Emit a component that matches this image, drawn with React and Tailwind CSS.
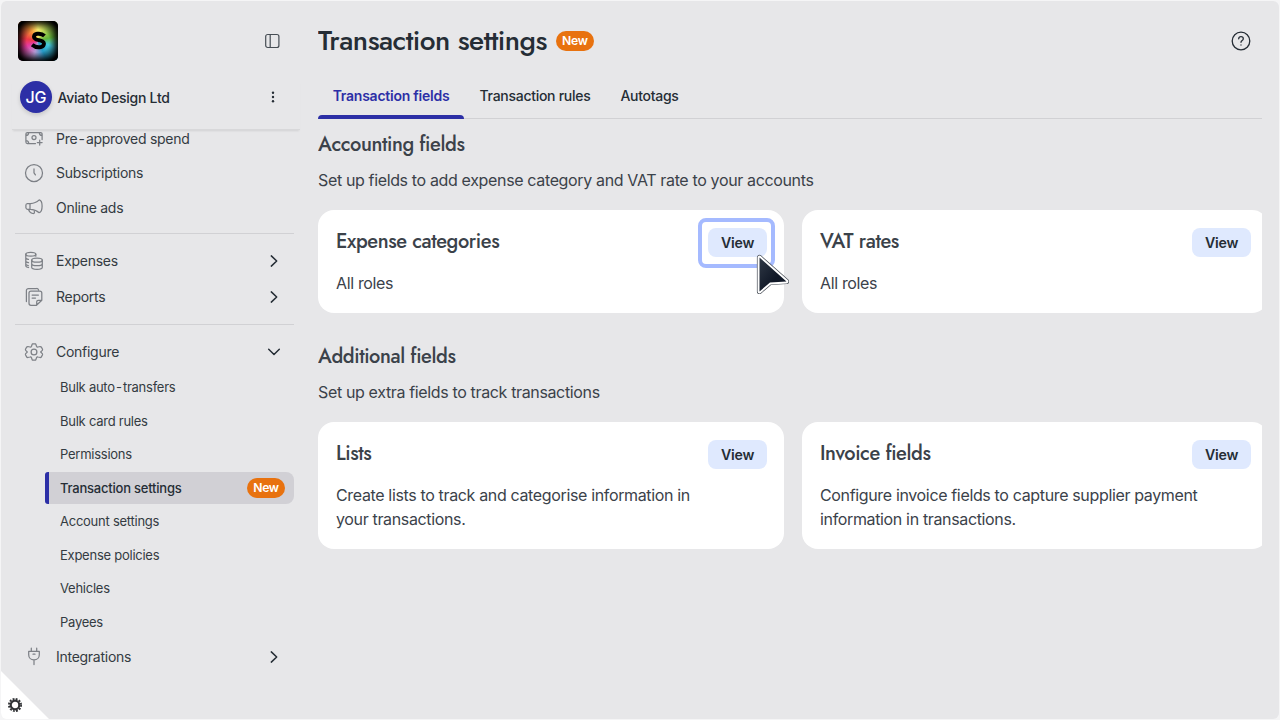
const subItems = [
  'Bulk auto-transfers',
  'Bulk card rules',
  'Permissions',
  'Transaction settings',
  'Account settings',
  'Expense policies',
  'Vehicles',
  'Payees',
]

function Icon({ children, className = 'size-5' }) {
  return (
    <svg
      viewBox="0 0 20 20"
      fill="none"
      stroke="currentColor"
      strokeWidth="1.25"
      strokeLinecap="round"
      strokeLinejoin="round"
      className={`shrink-0 ${className}`}
    >
      {children}
    </svg>
  )
}

const icons = {
  money: (
    <Icon>
      <path d="M11.500 14.500H3.400a1.500 1.500 0 0 1-1.500-1.500V5a1.500 1.500 0 0 1 1.500-1.500h13.200A1.500 1.500 0 0 1 18.100 5v5.500M1.900 6.500c1.800 0 2.800-1.100 2.800-3M18.100 6.500c-1.800 0-2.800-1.100-2.800-3M1.900 11.600c1.800 0 2.800 1.100 2.800 2.900M15.700 11.200v4.800M13.300 13.600h4.800" />
      <circle cx="10" cy="8.600" r="2" />
    </Icon>
  ),
  clock: (
    <Icon>
      <circle cx="10" cy="10" r="8.500" />
      <path d="M10 5.900v4l1.400 2" />
    </Icon>
  ),
  megaphone: (
    <Icon>
      <path d="M6.500 5.500H3.400A1.700 1.700 0 0 0 1.900 7.200v2.600a1.700 1.700 0 0 0 1.700 1.500h2.900c3.200 0 6.200 1.200 8.700 3.400 2-.4 2.900-3.300 2.900-6.600s-.9-5.800-2.900-6.200C12.700 4.300 9.700 5.500 6.500 5.500ZM6 5.600v5.600M4.600 11.600c.5 2 1.800 3.200 4.200 3.900 1.100.2 1.800-.4 1.600-1.500l-.3-2" />
    </Icon>
  ),
  coins: (
    <Icon>
      <ellipse cx="6.800" cy="3.200" rx="5" ry="1.900" />
      <path d="M1.800 3.200v11.500c0 .8 1.100 1.500 2.800 1.800M11.800 3.200v2M1.800 6.800c0 .8 1.100 1.400 2.600 1.600M1.800 10c0 .8 1.100 1.400 2.700 1.600M1.800 13c0 .7 1 1.300 2.500 1.600" />
      <ellipse cx="13" cy="9.200" rx="5.300" ry="2" />
      <path d="M7.700 9.200v7c0 1.200 2.300 2.100 5.300 2.100s5.300-.9 5.300-2.100v-7M7.700 12.700c0 1.200 2.300 2 5.300 2s5.300-.8 5.300-2" />
    </Icon>
  ),
  notes: (
    <Icon>
      <path d="M12.500 18.300H7a2 2 0 0 1-2-2V6a2 2 0 0 1 2-2h8.800a2 2 0 0 1 2 2v7.200l-5.300 5.100ZM12.700 18v-3.200a1.500 1.500 0 0 1 1.500-1.500h3.400M2.400 14.500V3.500a2 2 0 0 1 2-2h8.200a2 2 0 0 1 1.900 1.300M8.100 8.100h6.300M8.100 11h3.400" />
    </Icon>
  ),
  gear: (
    <Icon>
      <path d="M8.300 1.900h3.400l.8 2.300c.3.700.8 1 1.500.8l2.200-.5c.7 0 1 .3 1.300.9l.9 1.600c.3.600.3.900-.1 1.400L16.900 9.700c-.2.200-.2.400 0 .6l1.400 1.300c.4.500.4.800.1 1.400l-.9 1.600c-.3.600-.6.900-1.300.9l-2.200-.5c-.7-.2-1.200.1-1.500.8l-.8 2.300H8.300l-.8-2.300c-.3-.7-.8-1-1.500-.8l-2.200.5c-.7 0-1-.3-1.300-.9L1.600 13c-.3-.6-.3-.9.100-1.400l1.400-1.300c.2-.2.2-.4 0-.6L1.700 8.400c-.4-.5-.4-.8-.1-1.400l.9-1.600c.3-.6.6-.9 1.300-.9L6 5c.7.2 1.200-.1 1.500-.8z" />
      <circle cx="10" cy="10" r="2.900" />
    </Icon>
  ),
  plug: (
    <Icon>
      <path d="M7.300 1.200v3M12.700 1.200v3M4.700 4.300h10.600v3.400c0 2.900-2 5.200-5.300 5.200S4.700 10.600 4.700 7.700zM10 13v4.500M9 7.200h2" />
    </Icon>
  ),
}

function Chevron({ down }) {
  return (
    <svg viewBox="0 0 14 14" className="mr-[13px] size-[14px]" fill="none" stroke="#252d35" strokeWidth="1.5" strokeLinecap="round" strokeLinejoin="round">
      {down ? <path d="M1.700 4.300 7 9.500l5.300-5.200" /> : <path d="M4.300 1.900 9.700 7l-5.400 5.100" />}
    </svg>
  )
}

// the hyphen gets a little air on both sides
function Label({ text }) {
  const [first, second] = text.split('-')
  if (!second) return text
  return (
    <>
      {first}
      <span className="mx-[1.200px]">-</span>
      {second}
    </>
  )
}

function NavItem({ icon, label, chevron, className = 'h-9' }) {
  return (
    <div className={`flex shrink-0 items-center pl-6 pr-[6px] text-[#7d8086] ${className}`}>
      {icons[icon]}
      <span className="ml-3 flex-1 text-[14px] leading-5 tracking-[-0.270px] text-[#343b42]">
        <Label text={label} />
      </span>
      {chevron && <Chevron down={chevron === 'down'} />}
    </div>
  )
}

function NewBadge() {
  return (
    <span className="flex h-5 w-[38px] items-center justify-center rounded-full bg-[#e8720f] text-[12.200px] font-semibold tracking-[-0.300px] text-white">
      New
    </span>
  )
}

function Sidebar() {
  return (
    <aside className="flex w-[300px] shrink-0 flex-col">
      <div className="flex h-20 shrink-0 items-center justify-between pl-[18px] pr-5">
        <div className="relative flex size-10 items-center justify-center overflow-hidden rounded-[5px] bg-[conic-gradient(from_0deg,#f3ea6c,#62b53a_75deg,#45c9dc_110deg,#2599c5_155deg,#b09ad2_195deg,#e63ba0_245deg,#ee3945_280deg,#f69338_325deg,#f3ea6c)]">
          <div className="absolute inset-0 bg-[radial-gradient(circle,transparent_40%,#000_85%)] shadow-[inset_0_0_6px_1px_#000]" />
          <svg viewBox="0 0 20 22" className="relative mb-px h-[19px] w-[17px]" fill="none" stroke="#000" strokeWidth="4.600">
            <path d="M17 5.500C14.500 3 11.500 2.700 8.500 3.100c-4.300.6-5 4.600-1.800 6.300 2.400 1.200 5.700 1.200 8 2.600 3 1.900 1.700 5.900-2.200 6.700-3.500.7-7-.2-10-2.800" />
          </svg>
        </div>
        <svg viewBox="0 0 16 16" className="size-4" fill="none" stroke="#464d54" strokeWidth="1.200">
          <rect x="1.700" y="1.500" width="13.200" height="13" rx="2" />
          <path d="M6.200 1.500v13" />
        </svg>
      </div>
      <div className="ml-[12px] flex h-[49px] shrink-0 items-start border-b border-[#d8d8da] pl-2 shadow-[0_2px_2px_-1px_#00000018]">
        <div className="flex size-8 items-center justify-center rounded-full bg-[#2c2fa6] text-[16px] font-medium text-white shadow-[0_2px_4px_#00000026]">
          JG
        </div>
        <span className="ml-[5.500px] mt-[6px] flex-1 text-[14px] leading-[22px] font-[450] tracking-[-0.250px] text-[#252d35]">Aviato Design Ltd</span>
        <svg viewBox="0 0 4 14" className="mr-[25px] mt-[9px] h-[14px] w-1" fill="#252d35">
          <circle cx="2" cy="2.800" r="1.200" />
          <circle cx="2" cy="7" r="1.200" />
          <circle cx="2" cy="11.200" r="1.200" />
        </svg>
      </div>
      <nav className="flex flex-1 flex-col overflow-hidden">
        <NavItem icon="money" label="Pre-approved spend" className="-mt-2 h-[34px]" />
        <NavItem icon="clock" label="Subscriptions" className="h-[34px]" />
        <NavItem icon="megaphone" label="Online ads" className="h-9" />
        <div className="ml-[15px] mr-[6px] mt-[7px] mb-[9px] h-px shrink-0 bg-[#d1d1d4]" />
        <NavItem icon="coins" label="Expenses" chevron="right" />
        <NavItem icon="notes" label="Reports" chevron="right" />
        <div className="ml-[15px] mr-[6px] mt-[9px] mb-[9px] h-px shrink-0 bg-[#d1d1d4]" />
        <NavItem icon="gear" label="Configure" chevron="down" />
        <ul className="mt-[1.250px] text-[13px] tracking-[-0.250px] text-[#343b42]">
          {subItems.map((item) => (
            <li key={item} className="flex h-[33.500px] items-center pl-[45px] pr-[6px]">
              {item === 'Transaction settings' ? (
                <div className="mb-px flex h-8 flex-1 items-center justify-between overflow-hidden rounded-l-[3px] rounded-r-lg border-l-4 border-[#2c2fa6] bg-[#d1d0d5] pl-[11px] pr-[9px] font-[450] tracking-[-0.220px] text-[#252d35]">
                  <span className="pt-px">{item}</span>
                  <NewBadge />
                </div>
              ) : (
                <span className="pl-[15px]">
                  <Label text={item} />
                </span>
              )}
            </li>
          ))}
        </ul>
        <NavItem icon="plug" label="Integrations" chevron="right" className="h-9" />
      </nav>
    </aside>
  )
}

function ViewButton() {
  return (
    <button className="h-[29px] w-[59px] rounded-lg bg-[#dfe9fe] text-[14.200px] font-semibold tracking-[-0.250px] text-[#252d35]">
      View
    </button>
  )
}

function Card({ title, text, focused, className }) {
  return (
    <div className={`relative w-[466px] shrink-0 rounded-2xl bg-white px-[18px] pt-[18px] ${className}`}>
      <div className="flex h-[29px] items-start justify-between">
        <h3 className="font-['Jost','Lato'] text-[20px] leading-[28px] font-medium tracking-[-0.400px]">{title}</h3>
        <div className="-mr-px">
          <ViewButton />
        </div>
      </div>
      <p className="mt-[14px] w-[385px] text-[16px] leading-6 tracking-[-0.350px]">{text}</p>
      {focused && (
        <>
          <div className="absolute right-[9px] top-2 h-[50px] w-[77px] rounded-lg border-4 border-[#a5baff]" />
          <svg viewBox="0 0 36 44" className="absolute left-[435px] top-[41px] h-11 w-9">
            <defs>
              <linearGradient id="pointer" x1="0" y1="0" x2="1" y2="1">
                <stop offset="0" stopColor="#303946" />
                <stop offset=".6" stopColor="#101827" />
              </linearGradient>
            </defs>
            <path d="M6.500 6.500v34L17 31.500 33.500 30.500Z" fill="#333b48" stroke="#4a5059" strokeWidth="5.200" strokeLinejoin="round" />
            <path d="M6.500 6.500v34L17 31.500 33.500 30.500Z" fill="#fff" stroke="#fff" strokeWidth="3.800" strokeLinejoin="round" />
            <path d="M6.500 6.500v34L17 31.500 33.500 30.500Z" fill="url(#pointer)" />
          </svg>
        </>
      )}
    </div>
  )
}

function SectionHeading({ title, text }) {
  return (
    <>
      <h2 className="pt-px font-['Jost','Lato'] text-[20px] leading-7 font-medium tracking-[-0.390px]">{title}</h2>
      <p className="mt-[9px] text-[16px] leading-6 tracking-[-0.355px]">{text}</p>
    </>
  )
}

export default function App() {
  return (
    <div className="h-[720px] w-[1280px] overflow-hidden bg-[#f5f5f6] p-px font-['Inter',sans-serif]">
      <div className="relative -ml-px flex h-[718px] w-[1279px] overflow-hidden rounded-md border-l border-[#f5f5f6] bg-[#e7e7e9]">
        <div className="-ml-px flex">
          <Sidebar />
          <main className="ml-[18px] flex w-[944px] flex-col overflow-hidden text-[#3b424a]">
            <header className="flex h-[78px] shrink-0 items-center pt-[2px]">
              <h1 className="font-['Jost','Lato'] text-[28px] font-medium tracking-[-0.500px] text-[#252d35]">Transaction settings</h1>
              <div className="ml-[9px] flex-1">
                <NewBadge />
              </div>
              <svg viewBox="0 0 20 20" className="mr-[11px] size-5" fill="none" stroke="#252d35" strokeWidth="1.300" strokeLinecap="round">
                <circle cx="10" cy="10" r="8.800" />
                <path d="M7.700 7.800c.1-1.400 1-2.100 2.300-2.100s2.300.8 2.300 2c0 1.900-2.300 1.700-2.300 3.600M10 13.900v.1" />
              </svg>
            </header>
            <div className="flex h-10 shrink-0 border-b border-[#d1d1d4] text-[14px] leading-[22px] font-medium tracking-[-0.280px] text-[#252d35]">
              <div className="relative flex w-[146px] justify-center pt-[6px] font-semibold tracking-[-0.250px] text-[#2c2fa6]">
                Transaction fields
                <div className="absolute inset-x-0 -bottom-px h-1 rounded-t bg-[#2c2fa6]" />
              </div>
              <div className="ml-[15.500px] pt-[6px]">Transaction rules</div>
              <div className="ml-[30px] pt-[6px]">Autotags</div>
            </div>
            <section className="mt-[11px]">
              <SectionHeading title="Accounting fields" text="Set up fields to add expense category and VAT rate to your accounts" />
              <div className="mt-[18px] flex gap-[18px]">
                <Card title="Expense categories" text="All roles" focused className="h-[103px]" />
                <Card title="VAT rates" text="All roles" className="h-[103px]" />
              </div>
            </section>
            <section className="mt-[29px]">
              <SectionHeading title="Additional fields" text="Set up extra fields to track transactions" />
              <div className="mt-[18px] flex gap-[18px]">
                <Card title="Lists" text="Create lists to track and categorise information in your transactions." className="h-[127px]" />
                <Card title="Invoice fields" text="Configure invoice fields to capture supplier payment information in transactions." className="h-[127px]" />
              </div>
            </section>
          </main>
        </div>
        <div className="absolute bottom-0 left-0 size-12 bg-white [clip-path:polygon(0_0,100%_100%,0_100%)]">
          <svg viewBox="0 0 16 16" className="ml-[6px] mt-[26px] size-4" fill="none" stroke="#303235">
            <circle cx="8" cy="8" r="4.300" strokeWidth="2.200" />
            <circle cx="8" cy="8" r="6.100" strokeWidth="1.800" strokeDasharray="1.900 1.293" />
          </svg>
        </div>
      </div>
    </div>
  )
}
